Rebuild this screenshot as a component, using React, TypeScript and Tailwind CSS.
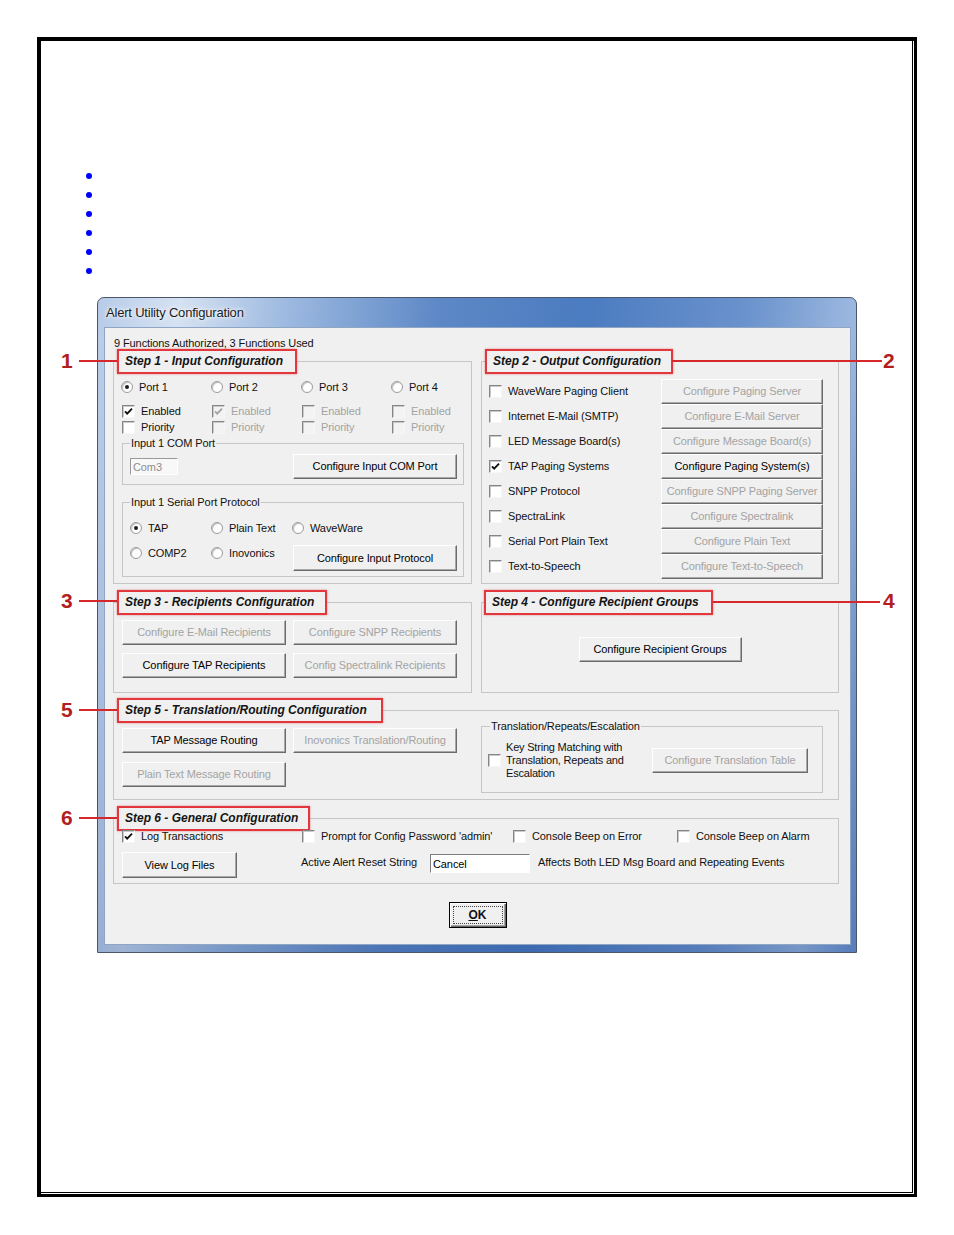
import clsx from "clsx";
import type { ReactNode } from "react";

const grey = "text-[#a3a3a3]";

function CheckBox({ checked = false, disabled = false }: { checked?: boolean; disabled?: boolean }) {
  return (
    <span
      className={clsx(
        "inline-flex h-[13px] w-[13px] shrink-0 items-center justify-center border border-t-[#858585] border-l-[#858585] border-r-[#f6f6f6] border-b-[#f6f6f6] shadow-[inset_1px_1px_0_#c9c9c9]",
        disabled ? "bg-[#f3f3f3]" : "bg-white"
      )}
    >
      {checked && (
        <svg viewBox="0 0 11 11" className="h-[11px] w-[11px]">
          <path d="M2 5.3 4.2 7.6 9 2.6" fill="none" stroke={disabled ? "#a4a4a4" : "#111"} strokeWidth="1.9" />
        </svg>
      )}
    </span>
  );
}

function RadioDot({ checked = false }: { checked?: boolean }) {
  return (
    <span className="inline-flex h-[12px] w-[12px] shrink-0 items-center justify-center rounded-full border border-[#9b9b9b] bg-white shadow-[inset_1px_1px_1px_#bdbdbd]">
      {checked && <span className="h-[4px] w-[4px] rounded-full bg-[#1d1d1d]" />}
    </span>
  );
}

function Option({
  radio = false,
  checked = false,
  disabled = false,
  label,
  className,
}: {
  radio?: boolean;
  checked?: boolean;
  disabled?: boolean;
  label: ReactNode;
  className?: string;
}) {
  return (
    <label className={clsx("flex items-center gap-[6px] whitespace-nowrap", disabled && grey, className)}>
      {radio ? <RadioDot checked={checked} /> : <CheckBox checked={checked} disabled={disabled} />}
      <span>{label}</span>
    </label>
  );
}

function Btn({ children, disabled = false, className }: { children: ReactNode; disabled?: boolean; className?: string }) {
  return (
    <button
      type="button"
      className={clsx(
        "flex items-center justify-center overflow-hidden whitespace-nowrap border border-t-white border-l-white border-r-[#6b6b6b] border-b-[#6b6b6b] bg-[#f0f0f0] shadow-[inset_-1px_-1px_0_#a8a8a8]",
        disabled ? grey : "text-black",
        className
      )}
    >
      {children}
    </button>
  );
}

// red-framed step title sitting on the group's top line
function StepLegend({ children, className }: { children: ReactNode; className: string }) {
  return (
    <legend
      className={clsx(
        "h-[25px] border-2 border-[#e2373d] pl-[6px] text-[12px] font-bold italic leading-[21px] tracking-[0px] whitespace-nowrap text-[#141414] shadow-[0_0_2px_rgba(226,55,61,0.55)]",
        className
      )}
    >
      {children}
    </legend>
  );
}

function SubLegend({ children, className = "ml-[7px]" }: { children: ReactNode; className?: string }) {
  return <legend className={clsx("px-[1px] leading-[13px]", className)}>{children}</legend>;
}

const outputs: [string, boolean, string, boolean][] = [
  ["WaveWare Paging Client", false, "Configure Paging Server", true],
  ["Internet E-Mail (SMTP)", false, "Configure E-Mail Server", true],
  ["LED Message Board(s)", false, "Configure Message Board(s)", true],
  ["TAP Paging Systems", true, "Configure Paging System(s)", false],
  ["SNPP Protocol", false, "Configure SNPP Paging Server", true],
  ["SpectraLink", false, "Configure Spectralink", true],
  ["Serial Port Plain Text", false, "Configure Plain Text", true],
  ["Text-to-Speech", false, "Configure Text-to-Speech", true],
];

function Dialog() {
  return (
    <div className="ml-[56px] mt-[17px] flex h-[656px] w-[760px] flex-col rounded-t-[7px] border border-[#4a5567] bg-[linear-gradient(180deg,rgba(255,255,255,0)_0%,rgba(255,255,255,0)_6%,rgba(30,70,140,0.3)_100%),linear-gradient(95deg,#b7cbe8_0%,#d6e2f2_10%,#9ab7df_24%,#5d88c6_42%,#4b7bc0_60%,#6b93cd_80%,#9cb8df_93%,#6f95cf_100%)]">
      <div className="flex h-[29px] items-center pl-[8px] text-[13px] tracking-[-0.2px] text-[#1b1b1b] [text-shadow:0_0_6px_#ffffff,0_0_3px_#ffffff]">
        Alert Utility Configuration
      </div>
      <div className="ml-[6px] h-[618px] w-[747px] border border-[#8ea5c4] bg-[#f0f0f0] pl-[8px] pt-[9px]">
        <div className="ml-[1px] h-[12px] leading-[12px]">9 Functions Authorized, 3 Functions Used</div>

        {/* steps 1 and 2 */}
        <div className="flex gap-[9px]">
          <fieldset className="h-[235px] w-[359px] min-w-0 border border-[#c6c6c6] pl-[8px] pr-[7px]">
            <StepLegend className="-ml-[5px] w-[180px]">Step 1 - Input Configuration</StepLegend>
            <div className="mt-[4px] grid h-[18px] grid-cols-[90px_90px_90px_90px] items-center">
              <Option radio checked label="Port 1" className="-ml-[1px]" />
              <Option radio label="Port 2" className="-ml-[1px]" />
              <Option radio label="Port 3" className="-ml-[1px]" />
              <Option radio label="Port 4" className="-ml-[1px]" />
            </div>
            <div className="mt-[7px] grid h-[16px] grid-cols-[90px_90px_90px_90px] items-center">
              <Option checked label="Enabled" />
              <Option checked disabled label="Enabled" />
              <Option disabled label="Enabled" />
              <Option disabled label="Enabled" />
            </div>
            <div className="grid h-[16px] grid-cols-[90px_90px_90px_90px] items-center">
              <Option label="Priority" />
              <Option disabled label="Priority" />
              <Option disabled label="Priority" />
              <Option disabled label="Priority" />
            </div>
            <fieldset className="mt-[2px] h-[48px] min-w-0 border border-[#c6c6c6]">
              <SubLegend>Input 1 COM Port</SubLegend>
              <div className="mt-[4px] flex items-center justify-between pl-[7px] pr-[6px]">
                <input
                  readOnly
                  value="Com3"
                  className="h-[17px] w-[48px] border border-t-[#9a9a9a] border-l-[#9a9a9a] border-r-white border-b-white bg-[#f8f8f8] pl-[2px] text-[#8d8d8d] outline-none"
                />
                <Btn className="h-[25px] w-[164px]">Configure Input COM Port</Btn>
              </div>
            </fieldset>
            <fieldset className="mt-[11px] h-[81px] min-w-0 border border-[#c6c6c6]">
              <SubLegend>Input 1 Serial Port Protocol</SubLegend>
              <div className="mt-[11px] grid h-[16px] grid-cols-[81px_81px_1fr] items-center pl-[7px] pr-[6px]">
                <Option radio checked label="TAP" />
                <Option radio label="Plain Text" />
                <Option radio label="WaveWare" />
              </div>
              <div className="mt-[9px] grid h-[26px] grid-cols-[81px_81px_1fr] items-start pl-[7px] pr-[6px]">
                <Option radio label="COMP2" className="h-[16px]" />
                <Option radio label="Inovonics" className="h-[16px]" />
                <Btn className="h-[26px] w-[164px] justify-self-end">Configure Input Protocol</Btn>
              </div>
            </fieldset>
          </fieldset>

          <fieldset className="h-[235px] w-[358px] min-w-0 border border-[#c6c6c6] pl-[7px] pr-[15px]">
            <StepLegend className="-ml-[4px] w-[188px]">Step 2 - Output Configuration</StepLegend>
            <div className="mt-[5px] flex flex-col">
              {outputs.map(([label, on, action, off]) => (
                <div key={label} className="flex h-[25px] items-center justify-between">
                  <Option checked={on} label={label} />
                  <Btn disabled={off} className="h-[25px] w-[162px]">
                    {action}
                  </Btn>
                </div>
              ))}
            </div>
          </fieldset>
        </div>

        {/* steps 3 and 4 */}
        <div className="mt-[6px] flex gap-[9px]">
          <fieldset className="h-[103px] w-[359px] min-w-0 border border-[#c6c6c6] pl-[8px]">
            <StepLegend className="-ml-[5px] w-[210px]">Step 3 - Recipients Configuration</StepLegend>
            <div className="mt-[5px] grid grid-cols-[164px_164px] gap-x-[7px] gap-y-[8px]">
              <Btn disabled className="h-[25px]">Configure E-Mail Recipients</Btn>
              <Btn disabled className="h-[25px]">Configure SNPP Recipients</Btn>
              <Btn className="h-[25px]">Configure TAP Recipients</Btn>
              <Btn disabled className="h-[25px]">Config Spectralink Recipients</Btn>
            </div>
          </fieldset>
          <fieldset className="h-[103px] w-[358px] min-w-0 border border-[#c6c6c6]">
            <StepLegend className="ml-[2px] w-[229px]">Step 4 - Configure Recipient Groups</StepLegend>
            <Btn className="mx-auto mt-[22px] h-[25px] w-[163px]">Configure Recipient Groups</Btn>
          </fieldset>
        </div>

        {/* step 5 */}
        <fieldset className="mt-[5px] h-[102px] w-[726px] min-w-0 border border-[#c6c6c6] pl-[8px]">
          <StepLegend className="-ml-[5px] w-[266px]">Step 5 - Translation/Routing Configuration</StepLegend>
          <div className="flex">
            <div className="mt-[5px] grid grid-cols-[164px_164px] content-start gap-x-[7px] gap-y-[9px]">
              <Btn className="h-[25px]">TAP Message Routing</Btn>
              <Btn disabled className="h-[25px]">Inovonics Translation/Routing</Btn>
              <Btn disabled className="h-[25px]">Plain Text Message Routing</Btn>
            </div>
            <fieldset className="-mt-[3px] ml-[24px] h-[73px] w-[342px] min-w-0 border border-[#c6c6c6] pl-[6px] pr-[14px]">
              <SubLegend className="ml-[2px]">Translation/Repeats/Escalation</SubLegend>
              <div className="mt-[8px] flex items-center">
                <CheckBox />
                <div className="ml-[5px] leading-[13px] tracking-[-0.2px]">
                  Key String Matching with
                  <br />
                  Translation, Repeats and
                  <br />
                  Escalation
                </div>
                <Btn disabled className="ml-auto h-[25px] w-[156px]">
                  Configure Translation Table
                </Btn>
              </div>
            </fieldset>
          </div>
        </fieldset>

        {/* step 6 */}
        <fieldset className="mt-[6px] h-[78px] w-[726px] min-w-0 border border-[#c6c6c6] pl-[8px]">
          <StepLegend className="-ml-[5px] w-[193px]">Step 6 - General Configuration</StepLegend>
          <div className="-mt-[2px] flex h-[14px] items-center">
            <Option checked label="Log Transactions" className="w-[180px]" />
            <Option label="Prompt for Config Password 'admin'" className="w-[211px]" />
            <Option label="Console Beep on Error" className="w-[164px]" />
            <Option label="Console Beep on Alarm" />
          </div>
          <div className="mt-[9px] flex h-[26px] items-start">
            <Btn className="h-[26px] w-[115px]">View Log Files</Btn>
            <span className="ml-[64px] mt-[4px] w-[129px] whitespace-nowrap leading-[13px]">Active Alert Reset String</span>
            <input
              readOnly
              value="Cancel"
              className="mt-[2px] h-[19px] w-[100px] border border-t-[#7c7c7c] border-l-[#7c7c7c] border-r-white border-b-white bg-white pl-[2px] text-black outline-none"
            />
            <span className="ml-[8px] mt-[4px] whitespace-nowrap leading-[13px]">Affects Both LED Msg Board and Repeating Events</span>
          </div>
        </fieldset>

        <button
          type="button"
          className="mx-auto mt-[18px] flex h-[26px] w-[58px] -translate-x-[4px] items-center justify-center border border-black bg-[#f0f0f0] shadow-[inset_1px_1px_0_#ffffff,inset_-1px_-1px_0_#696969,inset_-2px_-2px_0_#a3a3a3]"
        >
          <span className="flex h-[18px] w-[50px] items-center justify-center border border-dotted border-[#444] text-[12px] font-bold tracking-[0px]">
            <span className="underline">O</span>K
          </span>
        </button>
      </div>
    </div>
  );
}

export default function App() {
  return (
    <div className="relative h-[1235px] w-[954px] bg-white font-['Liberation_Sans',Arial,sans-serif] text-[11px] tracking-[-0.1px] text-[#111]">
      <div className="ml-[37px] pt-[37px]">
        <div className="h-[1160px] w-[880px] border-t-4 border-l-4 border-r-[3px] border-b-[3px] border-black pb-[1px] pr-[1px]">
          <div className="h-full border-r border-b border-black">
            <ul className="pl-[45px] pt-[125px]">
              {[0, 1, 2, 3, 4, 5].map((i) => (
                <li key={i} className="flex h-[19px] items-center">
                  <span className="h-[6px] w-[6px] rounded-full bg-[#0000ff]" />
                </li>
              ))}
            </ul>
            <Dialog />
          </div>
        </div>
      </div>

      {/* callouts */}
      <span className="absolute left-[61px] top-[349px] text-[21px] font-bold leading-[24px] text-[#b21e1e]">1</span>
      <span className="absolute left-[79px] top-[360px] h-[2px] w-[38px] bg-[#d6282c]" />
      <span className="absolute left-[672px] top-[360px] h-[2px] w-[210px] bg-[#d6282c]" />
      <span className="absolute left-[883px] top-[349px] text-[21px] font-bold leading-[24px] text-[#b21e1e]">2</span>
      <span className="absolute left-[61px] top-[589px] text-[21px] font-bold leading-[24px] text-[#b21e1e]">3</span>
      <span className="absolute left-[79px] top-[600px] h-[2px] w-[38px] bg-[#d6282c]" />
      <span className="absolute left-[713px] top-[601px] h-[2px] w-[167px] bg-[#d6282c]" />
      <span className="absolute left-[883px] top-[589px] text-[21px] font-bold leading-[24px] text-[#b21e1e]">4</span>
      <span className="absolute left-[61px] top-[698px] text-[21px] font-bold leading-[24px] text-[#b21e1e]">5</span>
      <span className="absolute left-[79px] top-[709px] h-[2px] w-[38px] bg-[#d6282c]" />
      <span className="absolute left-[61px] top-[806px] text-[21px] font-bold leading-[24px] text-[#b21e1e]">6</span>
      <span className="absolute left-[79px] top-[817px] h-[2px] w-[38px] bg-[#d6282c]" />
    </div>
  );
}
